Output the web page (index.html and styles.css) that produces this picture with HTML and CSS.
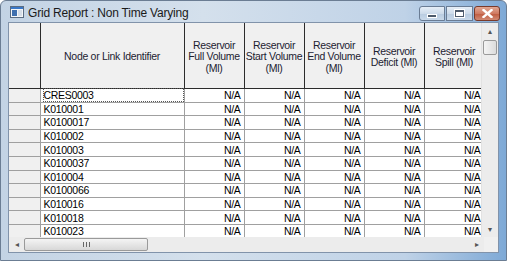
FILE: index.html
```html
<!DOCTYPE html>
<html lang="en">
<head>
    <meta charset="UTF-8">
    <title>Grid Report : Non Time Varying</title>
    <link rel="stylesheet" href="styles.css">
</head>
<body>

<div class="window">
    <div class="titlebar">
        <svg class="app-icon" width="14" height="12" viewBox="0 0 14 12">
            <rect x="0.5" y="0.5" width="13" height="11" fill="#f4f6f8" stroke="#5a6c82"/>
            <rect x="1" y="1" width="12" height="2" fill="#3a78c8"/>
            <rect x="2" y="4" width="5" height="6" fill="#3f6fae"/>
            <rect x="8" y="4" width="4" height="6" fill="#d6dee8"/>
        </svg>
        <span class="title">Grid Report : Non Time Varying</span>
        <div class="controls">
            <div class="btn btn-min"><span class="glyph-min"></span></div>
            <div class="btn btn-max"><span class="glyph-max"></span></div>
            <div class="btn btn-close">
                <svg width="11" height="9" viewBox="0 0 11 9">
                    <path d="M1.5 1 L9.5 8 M9.5 1 L1.5 8" stroke="#fff" stroke-width="2.4" stroke-linecap="square"/>
                </svg>
            </div>
        </div>
    </div>

    <div class="client">
        <div class="grid-row">
            <div class="grid-wrap">
                <table class="grid">
                    <colgroup>
                        <col class="c-rowhead">
                        <col class="c-ident">
                        <col class="c-num"><col class="c-num"><col class="c-num"><col class="c-num"><col class="c-num">
                    </colgroup>
                    <thead>
                        <tr>
                            <th></th>
                            <th>Node or Link Identifier</th>
                            <th>Reservoir<br>Full Volume<br>(Ml)</th>
                            <th>Reservoir<br>Start Volume<br>(Ml)</th>
                            <th>Reservoir<br>End Volume<br>(Ml)</th>
                            <th>Reservoir<br>Deficit (Ml)</th>
                            <th>Reservoir<br>Spill (Ml)</th>
                        </tr>
                    </thead>
                    <tbody id="rows"></tbody>
                </table>
            </div>
            <div class="vscroll">
                <div class="arrow">&#9652;</div>
                <div class="vtrack"><div class="vthumb"></div></div>
                <div class="arrow">&#9662;</div>
            </div>
        </div>
        <div class="hscroll-row">
            <div class="hscroll">
                <div class="arrow">&#9666;</div>
                <div class="htrack">
                    <div class="hthumb"><span class="grip"></span></div>
                </div>
                <div class="arrow">&#9656;</div>
            </div>
            <div class="corner"></div>
        </div>
    </div>
</div>

<script>
    var ids = ["CRES0003", "K010001", "K0100017", "K010002", "K010003", "K0100037",
               "K010004", "K0100066", "K010016", "K010018", "K010023"];
    var body = document.getElementById("rows");
    ids.forEach(function (id, i) {
        var tr = document.createElement("tr");
        var html = '<td class="rowhead"></td><td class="ident' + (i === 0 ? ' focus' : '') + '"><span>' + id + '</span></td>';
        for (var c = 0; c < 5; c++) html += '<td class="num">N/A</td>';
        tr.innerHTML = html;
        body.appendChild(tr);
    });
</script>

</body>
</html>
```

FILE: styles.css
```css
body {
    margin: 0;
    font-family: "Liberation Sans", Arial, sans-serif;
}
.window {
    width: 507px;
    height: 261px;
    box-sizing: border-box;
    border: 1px solid #6b7d93;
    border-radius: 6px 6px 0 0;
    background: linear-gradient(to right, #c3d3e4, #d4e0ec 40%, #bfd2e7 80%, #7ea9d6);
    padding: 0 7px 7px 7px;
    display: flex;
    flex-direction: column;
}
.titlebar {
    height: 21px;
    display: flex;
    align-items: center;
    position: relative;
}
.app-icon {
    margin: 1px 0 0 2px;
}
.title {
    font-size: 12px;
    color: #1a1a1a;
    margin-left: 4px;
    margin-top: 2px;
    letter-spacing: -0.2px;
}
.controls {
    position: absolute;
    right: -1px;
    top: 5px;
    display: flex;
    gap: 1px;
}
.btn {
    height: 13px;
    border: 1px solid #6a7c94;
    border-radius: 3px;
    display: flex;
    align-items: center;
    justify-content: center;
    background: linear-gradient(#e6eef7, #cddbea 50%, #b8cbe0 51%, #c9d9ea);
}
.btn-min {
    width: 24px;
    border-radius: 3px 0 0 3px;
}
.btn-max {
    width: 25px;
    border-radius: 0;
}
.btn-close {
    width: 24px;
    border-color: #7a3a2a;
    background: linear-gradient(#e2a894, #cf7a62 50%, #bf5a3e 51%, #d08a74);
}
.glyph-min {
    width: 8px;
    height: 2px;
    background: #4d5a6b;
    border: 1px solid #fff;
    margin-top: 4px;
}
.glyph-max {
    width: 7px;
    height: 4px;
    border: 1px solid #4d5a6b;
    border-top-width: 2px;
    background: #fff;
    outline: 1px solid #fff;
}
.client {
    flex: 1;
    background: #f0f0f0;
    border: 1px solid #8193aa;
    display: flex;
    flex-direction: column;
    overflow: hidden;
}
.grid-row {
    flex: 1;
    display: flex;
    overflow: hidden;
}
.grid-wrap {
    width: 475px;
    overflow: hidden;
    background: #f0f0f0;
}
.grid {
    width: 475px;
    border-collapse: collapse;
    table-layout: fixed;
    font-size: 10.5px;
    letter-spacing: -0.3px;
    color: #000;
}
.c-rowhead { width: 31px; }
.c-ident { width: 144px; }
.c-num { width: 60px; }
.grid th {
    height: 62px;
    padding: 3px 0 0 0;
    background: #f0f0f0;
    font-weight: normal;
    line-height: 11.5px;
    border-right: 1px solid #2b2b2b;
    border-bottom: 1px solid #2b2b2b;
    text-align: center;
    white-space: nowrap;
    color: #1c2230;
}
.grid td {
    height: 12.6px;
    padding: 0 3px;
    background: #fff;
    border-right: 1px solid #a0a0a0;
    border-bottom: 1px solid #a0a0a0;
    white-space: nowrap;
    line-height: 12px;
}
.grid td.rowhead {
    background: #f0f0f0;
}
.grid td.num {
    text-align: right;
    padding-right: 3px;
}
.grid td.focus span {
    display: block;
    outline: 1px dotted #555;
    margin-right: -2px;
}
.vscroll {
    width: 16px;
    display: flex;
    flex-direction: column;
    background: #ececec;
    border-left: 1px solid #e2e2e2;
}
.arrow {
    height: 16px;
    font-size: 8px;
    color: #555;
    display: flex;
    align-items: center;
    justify-content: center;
}
.vtrack {
    flex: 1;
}
.vthumb {
    height: 13px;
    margin: 1px 1px 0;
    border: 1px solid #9a9a9a;
    border-radius: 2px;
    background: linear-gradient(to right, #f4f4f4, #dcdcdc);
}
.hscroll-row {
    height: 15px;
    display: flex;
}
.hscroll {
    width: 475px;
    display: flex;
    background: #ececec;
}
.hscroll .arrow {
    width: 15px;
    height: 15px;
}
.htrack {
    flex: 1;
    padding: 1px 0;
}
.hthumb {
    width: 122px;
    height: 11px;
    border: 1px solid #9a9a9a;
    border-radius: 2px;
    background: linear-gradient(#f4f4f4, #d8d8d8);
    display: flex;
    align-items: center;
    justify-content: center;
}
.grip {
    width: 7px;
    height: 5px;
    background: repeating-linear-gradient(to right, #666 0 1px, transparent 1px 3px);
}
.corner {
    flex: 1;
    background: #f0f0f0;
}
```
